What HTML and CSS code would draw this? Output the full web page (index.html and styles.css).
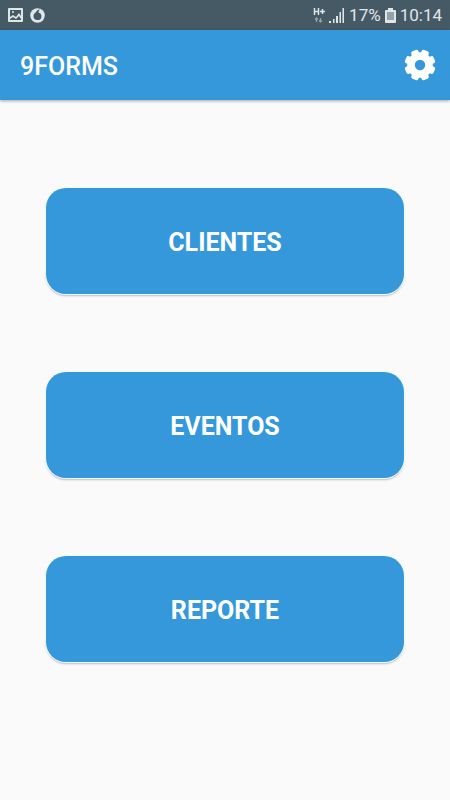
FILE: index.html
```
<!DOCTYPE html>
<html lang="es">

<head>
    <meta charset="utf-8">
    <title>9FORMS</title>
    <meta content="width=device-width, initial-scale=1.0" name="viewport">
    <link rel="stylesheet" href="styles.css">
</head>
<body>
<div class="status-bar">
    <div class="status-group">
        <svg width="15" height="14" viewBox="0 0 15 14">
            <path fill="#e0e7ea" fill-rule="evenodd" d="M1 0h13a1 1 0 0 1 1 1v12a1 1 0 0 1-1 1H1a1 1 0 0 1-1-1V1a1 1 0 0 1 1-1zM2 2v7l3-2 3 2 3-4 2 3V2zM2 11v1h11v-1l-2-3-3 3-3-2z"/>
            <circle cx="5" cy="4" r="1" fill="#e0e7ea"/>
        </svg>
        <svg width="15" height="15" viewBox="0 0 15 15">
            <circle cx="7.5" cy="7.5" r="7.3" fill="#e0e7ea"/>
            <path fill="#465a65" d="M10 1.2C8 1.5 6.5 2.7 6 4.2 4.300 5 3.500 6.500 3.500 8a4 4 0 0 0 8 .2c0-2-1.200-3.400-3-3.800.1-1.400.6-2.400 1.500-3.200z"/>
        </svg>
    </div>
    <div class="status-group status-right">
        <svg width="12" height="16" viewBox="0 0 12 16">
            <path stroke="#e0e7ea" stroke-width="1.5" fill="none" d="M1.500 1v7M5.500 1v7M1.500 4.500h4M7 4.500h5M9.500 2v5"/>
            <path stroke="#93a1a8" stroke-width="1.3" fill="none" d="M3.500 11v4M2 12.500L3.500 11 5 12.500M7.500 11v4M6 13.500L7.500 15 9 13.500"/>
        </svg>
        <svg width="16" height="15" viewBox="0 0 16 15">
            <path fill="#e0e7ea" d="M0 13h2v2H0zM4 11h1.500v4H4zM7 8h2v7H7zM10.500 4H12v11h-1.500zM13.500 0H15v15h-1.500z"/>
        </svg>
        <span>17%</span>
        <svg width="11" height="15" viewBox="0 0 11 15">
            <path fill="#e0e7ea" d="M3 0h5v2h2a1 1 0 0 1 1 1v11a1 1 0 0 1-1 1H1a1 1 0 0 1-1-1V3a1 1 0 0 1 1-1h2z"/>
            <path fill="#93a1a8" d="M2 4h7v8H2z"/>
        </svg>
        <span>10:14</span>
    </div>
</div>

<header class="toolbar">
    <h1>9FORMS</h1>
    <button type="button" class="settings" aria-label="Ajustes">
        <svg width="32" height="32" viewBox="-16 -16 32 32">
            <g fill="#fff">
                <circle r="12.8"/>
                <rect x="-3.8" y="-15.5" width="7.6" height="31" rx="2" transform="rotate(22.5)"/>
                <rect x="-3.8" y="-15.5" width="7.6" height="31" rx="2" transform="rotate(67.5)"/>
                <rect x="-3.8" y="-15.5" width="7.6" height="31" rx="2" transform="rotate(112.5)"/>
                <rect x="-3.8" y="-15.5" width="7.6" height="31" rx="2" transform="rotate(157.5)"/>
            </g>
            <circle r="5.2" fill="#3498db"/>
        </svg>
    </button>
</header>

<main class="menu">
    <button type="button" class="menu-button">CLIENTES</button>
    <button type="button" class="menu-button">EVENTOS</button>
    <button type="button" class="menu-button">REPORTE</button>
</main>
</body>
</html>
```

FILE: styles.css
```
body {
    font-family: Roboto, sans-serif;
    margin: 0;
    background: #fafafa;
    color: #fff;
}

.status-bar {
    display: flex;
    justify-content: space-between;
    align-items: center;
    height: 30px;
    padding: 0 8px;
    background: #465a65;
    color: #e0e7ea;
    font-size: 17px;
}

.status-group {
    display: flex;
    align-items: center;
    gap: 7px;
}

.status-right {
    gap: 4px;
}

.toolbar {
    display: flex;
    justify-content: space-between;
    align-items: center;
    height: 70px;
    padding: 0 14px 0 20px;
    background: #3498db;
    box-shadow: 0 1px 3px rgba(0, 0, 0, 0.35);
}

.toolbar h1 {
    margin: 0;
    padding-top: 2px;
    font-size: 25px;
    font-weight: 500;
}

.settings {
    display: flex;
    padding: 0;
    border: none;
    background: none;
    cursor: pointer;
}

.menu {
    display: flex;
    flex-direction: column;
    gap: 78px;
    padding: 88px 46px;
}

.menu-button {
    height: 106px;
    padding: 2px 0 0;
    border: none;
    border-radius: 20px;
    background: #3498db;
    box-shadow: 0 0 0 1px #f0f9fb, 0 2px 2px rgba(0, 0, 0, 0.25);
    color: #fff;
    font-family: inherit;
    font-size: 25px;
    font-weight: 700;
    cursor: pointer;
}
```
